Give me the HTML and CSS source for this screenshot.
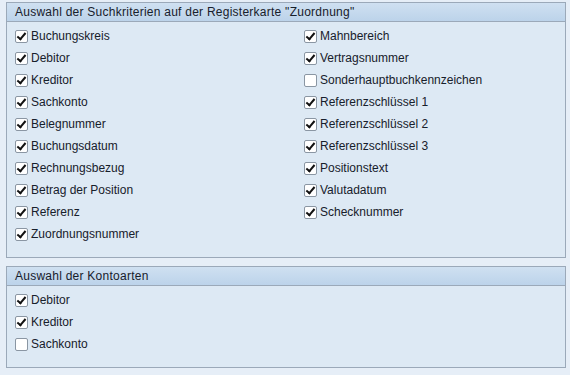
FILE: index.html
```html
<!DOCTYPE html>
<html lang="de">
<head>
  <meta charset="UTF-8">
  <title>Zuordnung</title>
  <link rel="stylesheet" href="styles.css">
</head>
<body>

  <div class="group">
    <div class="group-title">Auswahl der Suchkriterien auf der Registerkarte "Zuordnung"</div>
    <div class="group-body cols">
      <div class="col left">
        <label class="row"><span class="cb on"></span>Buchungskreis</label>
        <label class="row"><span class="cb on"></span>Debitor</label>
        <label class="row"><span class="cb on"></span>Kreditor</label>
        <label class="row"><span class="cb on"></span>Sachkonto</label>
        <label class="row"><span class="cb on"></span>Belegnummer</label>
        <label class="row"><span class="cb on"></span>Buchungsdatum</label>
        <label class="row"><span class="cb on"></span>Rechnungsbezug</label>
        <label class="row"><span class="cb on"></span>Betrag der Position</label>
        <label class="row"><span class="cb on"></span>Referenz</label>
        <label class="row"><span class="cb on"></span>Zuordnungsnummer</label>
      </div>
      <div class="col">
        <label class="row"><span class="cb on"></span>Mahnbereich</label>
        <label class="row"><span class="cb on"></span>Vertragsnummer</label>
        <label class="row"><span class="cb"></span>Sonderhauptbuchkennzeichen</label>
        <label class="row"><span class="cb on"></span>Referenzschlüssel 1</label>
        <label class="row"><span class="cb on"></span>Referenzschlüssel 2</label>
        <label class="row"><span class="cb on"></span>Referenzschlüssel 3</label>
        <label class="row"><span class="cb on"></span>Positionstext</label>
        <label class="row"><span class="cb on"></span>Valutadatum</label>
        <label class="row"><span class="cb on"></span>Schecknummer</label>
      </div>
    </div>
  </div>

  <div class="group second">
    <div class="group-title">Auswahl der Kontoarten</div>
    <div class="group-body">
      <label class="row"><span class="cb on"></span>Debitor</label>
      <label class="row"><span class="cb on"></span>Kreditor</label>
      <label class="row"><span class="cb"></span>Sachkonto</label>
    </div>
  </div>

</body>
</html>
```

FILE: styles.css
```css
body {
  margin: 0;
  padding: 2px 4px 0 6px;
  background: #e6eef7;
  font-family: "Liberation Sans", Arial, sans-serif;
  font-size: 12px;
  color: #17202b;
}

/* group frame */
.group {
  border: 1px solid #9ba9b9;
  background: #dde9f4;
}
.group.second {
  margin-top: 8px;
}
.group-title {
  height: 18px;
  line-height: 18px;
  padding-left: 8px;
  letter-spacing: 0.25px;
  background: linear-gradient(#cfe0f1, #bcd3ea);
  border-bottom: 1px solid #9ba9b9;
}
.group-body {
  padding: 3px 0 12px 8px;
}
.cols {
  display: grid;
  grid-template-columns: 289px 1fr;
}

/* checkbox rows */
.row {
  display: flex;
  align-items: center;
  height: 22px;
}
.cb {
  width: 11px;
  height: 11px;
  border: 1px solid #8a96a3;
  border-radius: 2px;
  background: #fff;
  margin-right: 3px;
  position: relative;
}
.cb.on::after {
  content: "";
  position: absolute;
  left: 3px;
  top: 0px;
  width: 3px;
  height: 7px;
  border: solid #111;
  border-width: 0 2px 2px 0;
  transform: rotate(40deg);
}
```
